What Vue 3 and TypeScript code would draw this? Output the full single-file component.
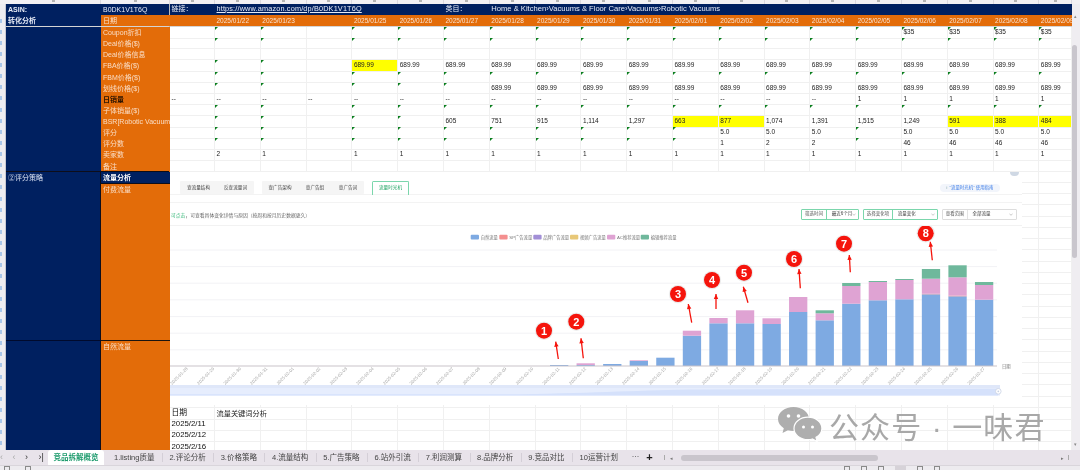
<script setup lang="ts">
interface Cell { text?: string; tri?: boolean; hi?: boolean }
const range = (a: number, b: number): number[] => Array.from({ length: b - a + 1 }, (_, i) => a + i)

const rowNums = range(1, 41)
const dates: Record<number, string> = {
  1: '2025/01/22', 2: '2025/01/23', 4: '2025/01/25', 5: '2025/01/26', 6: '2025/01/27', 7: '2025/01/28',
  8: '2025/01/29', 9: '2025/01/30', 10: '2025/01/31', 11: '2025/02/01', 12: '2025/02/02', 13: '2025/02/03',
  14: '2025/02/04', 15: '2025/02/05', 16: '2025/02/06', 17: '2025/02/07', 18: '2025/02/08', 19: '2025/02/09'
}
const columns = range(0, 19)
const labels = ['Coupon折扣', 'Deal价格($)', 'Deal价格信息', 'FBA价格($)', 'FBM价格($)', '划线价格($)', '日销量', '子体销量($)', 'BSR[Robotic Vacuum', '评分', '评分数', '卖家数', '备注']

const allTri = [1, 2, ...range(4, 19)]
function makeRow(tris: number[], vals: Record<number, string>, his: number[] = []): Cell[] {
  return columns.map((c) => ({ text: vals[c], tri: tris.includes(c), hi: his.includes(c) }))
}
function fill(from: number, to: number, v: string): Record<number, string> {
  const o: Record<number, string> = {}
  range(from, to).forEach((c) => { o[c] = v })
  return o
}
const rows: Cell[][] = [
  makeRow(allTri, fill(16, 19, '$35')),
  makeRow(allTri, {}),
  makeRow([], {}),
  makeRow([1, 2], fill(4, 19, '689.99'), [4]),
  makeRow(allTri, {}),
  makeRow([1, 2, 4, 5, 6], fill(7, 19, '689.99')),
  makeRow([], { ...fill(0, 14, '--'), ...fill(15, 19, '1') }),
  makeRow(allTri, {}),
  makeRow([1, 2, 4, 5], {
    6: '605', 7: '751', 8: '915', 9: '1,114', 10: '1,297', 11: '663', 12: '877', 13: '1,074', 14: '1,391',
    15: '1,515', 16: '1,249', 17: '591', 18: '388', 19: '484'
  }, [11, 12, 17, 18, 19]),
  makeRow([1, 2, 4, 5, 6, 7, 8, 9, 10, 11, 15], { 12: '5.0', 13: '5.0', 14: '5.0', ...fill(16, 19, '5.0') }),
  makeRow([1, 2, 4, 5, 6, 7, 8, 9, 10, 11, 15], { 12: '1', 13: '2', 14: '2', ...fill(16, 19, '46') }),
  makeRow([], { 1: '2', 2: '1', ...fill(4, 19, '1') }),
  makeRow([], {})
]
const blankRows = range(1, 21)
const sheetDates = ['2025/2/11', '2025/2/12', '2025/2/16']

const tabGroups = [
  [{ t: '查流量结构', w: 37 }, { t: '反查流量词', w: 37 }],
  [{ t: '查广告架构', w: 36 }, { t: '查广告组', w: 34 }, { t: '查广告词', w: 32 }]
]
const controls = [
  { k: '筛选时间', v: '最近6个月', kw: 24.5, w: 58, on: true },
  { k: '选择变化项', v: '流量变化', kw: 28.5, w: 74.7, on: true },
  { k: '查看范围', v: '全部流量', kw: 24.5, w: 74.7, on: false }
]

const palette = { blue: '#7eaae2', sp: '#f48f8f', brand: '#a28fd6', video: '#e8c878', pink: '#dfa3d3', green: '#6fb89c' }
const legend = [
  { x: 470.7, c: palette.blue, t: '自然流量' },
  { x: 499.3, c: palette.sp, t: 'SP广告流量' },
  { x: 533.3, c: palette.brand, t: '品牌广告流量' },
  { x: 570, c: palette.video, t: '视频广告流量' },
  { x: 607, c: palette.pink, t: 'AC推荐流量' },
  { x: 640.7, c: palette.green, t: '编辑推荐流量' }
]
const gridY = [250, 266.6, 283.2, 299.8, 316.6, 333.2, 349.8]
const axisY = 366
const barTops: number[][] = [
  [365], [365, 365, 363.3], [364], [361, 361, 360.3], [357.7],
  [335.7, 335.7, 330.7], [323.3, 323.3, 318], [323.3, 323.3, 310.3], [324, 324, 318.3],
  [312, 312, 297], [320.3, 320.3, 313.3, 310.3], [303.7, 303.7, 286, 283], [300.3, 300.3, 282, 281],
  [299.3, 299.3, 280, 279], [294.3, 293.8, 278.7, 269], [296.3, 295.6, 277.3, 265.3], [299.7, 299.7, 285, 282]
]
const layerColors = [palette.blue, palette.sp, palette.pink, palette.green]
const bars = barTops.flatMap((tops, i) =>
  tops.map((top, j) => ({
    key: `${i}-${j}`,
    x: 550 + i * 26.56,
    y: top,
    h: (j === 0 ? axisY : tops[j - 1]) - top,
    c: layerColors[j]
  })).filter((s) => s.h > 0)
)
const xLabels = [
  ...range(28, 31).map((d) => `2025-01-${d}`),
  ...range(1, 27).map((d) => `2025-02-${String(d).padStart(2, '0')}`)
].map((t, i) => ({ t, x: 179 + i * 26.57, y: 376 }))

const badges = [
  { n: 1, cx: 544, cy: 330.7, x1: 558.3, y1: 359, x2: 555.7, y2: 341.7 },
  { n: 2, cx: 576.3, cy: 321.7, x1: 583.3, y1: 358.3, x2: 581, y2: 338.3 },
  { n: 3, cx: 678, cy: 294, x1: 691.7, y1: 322.7, x2: 688.3, y2: 304 },
  { n: 4, cx: 712, cy: 280, x1: 716, y1: 309, x2: 716, y2: 294 },
  { n: 5, cx: 744, cy: 272.7, x1: 748, y1: 302.7, x2: 743.3, y2: 286.7 },
  { n: 6, cx: 794, cy: 259, x1: 800.3, y1: 288.3, x2: 799, y2: 269 },
  { n: 7, cx: 844, cy: 243.7, x1: 850.3, y1: 272.3, x2: 849.3, y2: 255 },
  { n: 8, cx: 925.7, cy: 233.3, x1: 932.3, y1: 260.3, x2: 930.3, y2: 241.7 }
].map((b) => ({
  ...b,
  angle: (Math.atan2(b.x1 - b.x2, b.y1 - b.y2) * -180) / Math.PI
}))
const sheetTabs = ['1.listing质量', '2.评论分析', '3.价格策略', '4.流量结构', '5.广告策略', '6.站外引流', '7.利润测算', '8.品牌分析', '9.竞品对比', '10运营计划']
</script>

<template>
  <div class="app">
    <div class="ruler">
      <div class="ruler-corner"></div>
      <div class="ruler-left"><span><i></i></span><span><i></i></span></div>
      <div class="gr ruler-cols"><span v-for="c in columns" :key="c"><i></i></span></div>
    </div>

    <div class="main">
      <div class="rowhead"><span v-for="n in rowNums" :key="n"><i></i></span></div>

      <div class="left">
        <div class="asin"><b class="c1">ASIN:</b><span class="c2">B0DK1V1T6Q</span></div>
        <div class="conv"><b class="c1">转化分析</b><span class="c2 date-label">日期</span></div>
        <div class="sec1">
          <div class="navy-col"></div>
          <div class="orange-col">
            <div v-for="(l, i) in labels" :key="l" class="lab" :class="{ dark: i === 6 }">{{ l }}</div>
          </div>
        </div>
        <div class="sec2">
          <div class="navy-col stack">
            <div class="strategy">②评分策略</div>
          </div>
          <div class="stack">
            <div class="flow-head">流量分析</div>
            <div class="orange-col paid"><div class="lab">付费流量</div></div>
            <div class="orange-col organic"><div class="lab">自然流量</div></div>
          </div>
        </div>
        <div class="navy-rule"></div>
      </div>

      <div class="cells">
        <div class="gr head-navy">
          <span class="hc" style="grid-column: 1">链接：</span>
          <a class="hc url" style="grid-column: 2 / span 5">https://www.amazon.com/dp/B0DK1V1T6Q</a>
          <span class="hc" style="grid-column: 7">类目：</span>
          <span class="hc cat" style="grid-column: 8 / span 13">Home &amp; Kitchen›Vacuums &amp; Floor Care›Vacuums›Robotic Vacuums</span>
        </div>
        <div class="gr head-orange">
          <span v-for="c in columns" :key="c" class="dc">{{ dates[c] }}</span>
        </div>
        <div v-for="(r, i) in rows" :key="i" class="gr row">
          <div v-for="(c, j) in r" :key="j" class="cell" :class="{ tri: c.tri, hi: c.hi }">{{ c.text }}</div>
        </div>
        <div v-for="b in blankRows" :key="'b' + b" class="gr row tall">
          <div v-for="c in columns" :key="c" class="cell"></div>
        </div>
        <div class="gr row tall">
          <div class="cell big">日期</div>
          <div class="cell kw">流量关键词分析</div>
          <div v-for="c in columns.slice(3)" :key="c" class="cell"></div>
        </div>
        <div v-for="d in sheetDates" :key="d" class="gr row tall">
          <div class="cell big">{{ d }}</div>
          <div v-for="c in columns.slice(1)" :key="c" class="cell"></div>
        </div>

        <div class="float">
          <div class="corner-mark"></div>
          <div class="f-tabs">
            <div v-for="(g, gi) in tabGroups" :key="gi" class="f-group">
              <span v-for="t in g" :key="t.t" class="f-tab" :style="{ width: t.w + 'px' }">{{ t.t }}</span>
            </div>
            <div class="f-active">流量时光机</div>
            <div class="help"><i>♀</i> "流量时光机" 使用指南</div>
          </div>
          <div class="f-gap"></div>
          <div class="f-tools">
            <div class="note"><em>可点击</em>，可查看具体变化详情与原因（按周和按月历史数据更久）</div>
            <div class="ctrls">
              <div v-for="c in controls" :key="c.k" class="ctrl" :class="{ on: c.on }" :style="{ width: c.w + 'px' }">
                <span class="ck" :style="{ width: c.kw + 'px' }">{{ c.k }}</span>
                <span class="cv">{{ c.v }}</span>
                <svg class="chev" width="4" height="3" viewBox="0 0 4 3"><path d="M.4.6 2 2.3 3.6.6" fill="none" stroke="#aaa" stroke-width=".6" /></svg>
              </div>
            </div>
          </div>
          <svg class="chart" width="852" height="179" viewBox="170 226 852 179">
            <g v-for="l in legend" :key="l.t">
              <rect :x="l.x" y="234.8" width="8.3" height="4.6" rx="1" :fill="l.c" />
              <text :x="l.x + 10" y="238.7" class="lg">{{ l.t }}</text>
            </g>
            <line v-for="y in gridY" :key="y" x1="170" x2="997" :y1="y" :y2="y" stroke="#f2f2f5" stroke-width="1" />
            <rect v-for="b in bars" :key="b.key" :x="b.x" :y="b.y" width="18.3" :height="b.h" :fill="b.c" />
            <line x1="170" x2="997" :y1="axisY" :y2="axisY" stroke="#c9c3c9" stroke-width="1" />
            <text x="1002" y="367.8" class="lg">日期</text>
            <text v-for="l in xLabels" :key="l.t" class="xl" :transform="`translate(${l.x} ${l.y}) rotate(-45)`" text-anchor="middle" y="1.5">{{ l.t }}</text>
            <rect x="170" y="385" width="830" height="10.6" fill="#e6edfd" />
            <rect x="170" y="385" width="830" height="3" fill="#dfe7f9" />
            <path d="M170 394.2 H520 C600 393 640 390 700 389.5 L998 388.8 V395.6 H170Z" fill="#d5e1fb" />
            <circle cx="998.3" cy="391.3" r="2.8" fill="#fff" stroke="#c9d2e3" stroke-width=".8" />
            <circle cx="998.3" cy="391.3" r=".9" fill="#c9d2e3" />
            <g v-for="a in badges" :key="a.n">
              <line :x1="a.x1" :y1="a.y1" :x2="a.x2" :y2="a.y2" stroke="#f5140c" stroke-width="1.3" />
              <path :d="`M0 0 l-2.200 5 h4.400 z`" :transform="`translate(${a.x2} ${a.y2}) rotate(${a.angle})`" fill="#f5140c" />
              <circle :cx="a.cx" :cy="a.cy" r="9.2" fill="#ececec" />
              <circle :cx="a.cx" :cy="a.cy" r="8" fill="#f5140c" />
              <text :x="a.cx" :y="a.cy + 3.8" text-anchor="middle" class="bn">{{ a.n }}</text>
            </g>
          </svg>
        </div>

        <div class="watermark">
          <svg width="44" height="36" viewBox="0 0 44 36">
            <path d="M15.500 0C7 0 0 5.300 0 12c0 3.800 2.300 7 5.800 9.200L4.500 26l5.400-2.700c1.800.5 3.700.8 5.600.8 8.500 0 15.500-5.400 15.500-12.100S24 0 15.500 0Z" fill="#aeaeae" />
            <circle cx="10.500" cy="9" r="1.800" fill="#fff" />
            <circle cx="20.500" cy="9" r="1.800" fill="#fff" />
            <path d="M30 10.200c-7.800 0-14 4.900-14 11.200s6.200 11.200 14 11.200c1.500 0 3-.2 4.400-.6l4.700 2.600-1.100-4.300c3.600-2 5.900-5.300 5.900-8.900 0-6.300-6.100-11.200-13.900-11.200Z" fill="#aeaeae" stroke="#fff" stroke-width="1.200" />
            <circle cx="25.500" cy="20" r="1.500" fill="#fff" />
            <circle cx="34.500" cy="20" r="1.500" fill="#fff" />
          </svg>
          <span>公众号 · 一味君</span>
        </div>
      </div>

      <div class="vscroll">
        <span class="up">▴</span>
        <div class="vthumb"></div>
        <span class="down">▾</span>
      </div>
    </div>

    <div class="tabs">
      <div class="tnav"><span>‹</span><span>‹</span><b>›</b><b>›|</b></div>
      <div class="tab-active">竞品拆解概览</div>
      <div class="tlist"><span v-for="t in sheetTabs" :key="t" class="tab">{{ t }}</span></div>
      <span class="more">···</span>
      <span class="plus">+</span>
      <div class="hbar">
        <i class="tick"></i><i class="arr">◂</i>
        <div class="hthumb"></div>
        <i class="arr">▸</i><i class="tick"></i>
      </div>
    </div>

    <div class="status">
      <div class="st-left"><i></i><i></i></div>
      <div class="st-right"><i></i><i></i><i></i><b></b><i></i><i></i></div>
    </div>
  </div>
</template>

<style>
html, body { margin: 0; background: #fff; }
</style>

<style scoped>
.app {
  width: 1080px;
  height: 470px;
  overflow: hidden;
  display: flex;
  flex-direction: column;
  font-family: "Liberation Sans", "Noto Sans CJK SC", sans-serif;
  filter: blur(0.35px);
  background: #fff;
}
.gr {
  display: grid;
  grid-template-columns: 45px repeat(18, 45.8px) 32.6px;
}
.ruler { height: 4px; display: flex; background: #f3f1f4; overflow: hidden; flex: none; }
.ruler-corner { width: 6px; }
.ruler-left { width: 164px; display: grid; grid-template-columns: 95px 69px; }
.ruler-left span, .ruler-cols span { display: flex; justify-content: center; border-right: 1px solid #dcd9df; }
.ruler-left i, .ruler-cols i { display: block; width: 3px; height: 2px; background: #b5b5b5; }
.main { display: flex; height: 446px; flex: none; overflow: hidden; }
.rowhead { width: 6px; background: #eeedf1; display: flex; flex-direction: column; overflow: hidden; flex: none; border-right: 1px solid #c9c9d2; box-sizing: border-box; padding-top: 11px; }
.rowhead span { height: 11.13px; flex: none; display: flex; align-items: center; }
.rowhead i { display: block; width: 2px; height: 4px; background: #a9c7ea; }

.left { width: 164px; flex: none; display: flex; flex-direction: column; position: relative; border-right: 1px solid #b9b9b9; box-sizing: border-box; }
.asin, .conv { display: grid; grid-template-columns: 95px 69px; color: #e6ebf6; font-size: 7px; background: #002060; }
.asin { height: 10.5px; line-height: 11.5px; }
.conv { height: 11.5px; line-height: 11.5px; border-bottom: 1px solid #d4d4d4; box-sizing: content-box; }
.c1 { padding-left: 2px; font-weight: 700; }
.c2 { padding-left: 2px; }
.date-label { background: #e36c09; color: #f9dfc8; }
.sec1 { display: grid; grid-template-columns: 95px 69px; height: 144px; }
.navy-col { background: #002060; }
.orange-col { background: #e36c09; }
.lab { height: 11.13px; line-height: 11.13px; padding-left: 2px; font-size: 7px; color: #f9dcc4; white-space: nowrap; }
.lab.dark { color: #2b1400; font-weight: 700; }
.sec2 { display: grid; grid-template-columns: 95px 69px; flex: 1; border-top: 1px solid #0d0d1a; min-height: 0; }
.stack { display: flex; flex-direction: column; }
.navy-col.stack { border-right: 1px solid #0d0d1a; position: relative; }
.strategy { height: 11px; line-height: 11px; font-size: 7px; color: #dfe6f5; padding-left: 2px; }
.flow-head { height: 11px; line-height: 11.5px; padding-left: 2px; background: #002060; color: #fff; font-size: 7px; font-weight: 700; border-bottom: 1px solid #0d0d1a; }
.paid { height: 156px; border-bottom: 1px solid #1a1410; }
.organic { flex: 1; }
.navy-rule { position: absolute; left: 0; width: 95px; top: 336px; height: 1px; background: #000a2c; }

.cells { width: 902px; flex: none; position: relative; overflow: hidden; }
.head-navy { height: 10.5px; line-height: 10.5px; background: #002060; color: #e6ebf6; font-size: 7px; white-space: nowrap; }
.hc { padding-left: 1.500px; grid-row: 1; }
.cat { font-size: 7.600px; }
.url { text-decoration: underline; font-size: 7.3px; letter-spacing: .16px; }
.head-orange { height: 11.5px; line-height: 11.5px; background: #e36c09; color: #f8e2d0; font-size: 6.500px; border-bottom: 1px solid #d4d4d4; }
.dc { padding-left: 1.500px; white-space: nowrap; overflow: hidden; }
.row { height: 11.13px; }
.row.tall { height: 11.25px; }
.cell {
  position: relative;
  box-sizing: border-box;
  border-right: 1px solid #f0f0f0;
  border-bottom: 1px solid #f0f0f0;
  padding-left: 1.500px;
  font-size: 6.500px;
  line-height: 10.5px;
  color: #222;
  white-space: nowrap;
}
.cell.hi { background: #ffff00; }
.cell.tri::before {
  content: "";
  position: absolute;
  left: 0;
  top: 0;
  border-top: 3px solid #0a7f1e;
  border-right: 3px solid transparent;
}
.cell.big { font-size: 7.800px; line-height: 10.5px; color: #111; }
.cell.kw { grid-column: span 2; font-size: 7.200px; line-height: 11px; color: #222; }

.float { position: absolute; left: 0; top: 168px; width: 852px; height: 233px; background: #fff; color: #555; }
.corner-mark { position: absolute; right: 3px; top: 0; width: 9px; height: 4px; border-radius: 0 0 6px 6px; background: #cfd8e4; }
.f-tabs { height: 23px; box-sizing: border-box; padding: 9px 22px 0 10px; display: flex; gap: 8px; border-bottom: 1px solid #f3f3f3; }
.f-group { display: flex; background: #f5f5f5; height: 13px; border-radius: 1px; }
.f-tab, .f-active { font-size: 4.600px; line-height: 13px; text-align: center; color: #444; white-space: nowrap; }
.f-active { width: 37px; height: 14px; box-sizing: border-box; line-height: 12px; color: #1fa463; border: 1px solid #7bd6ac; border-bottom: 0; border-radius: 1.500px 1.500px 0 0; }
.help { margin: 3px 0 0 auto; height: 8px; width: 60px; border-radius: 4px; background: #f2f5fb; color: #3a7ce8; font-size: 4.400px; line-height: 8px; padding-left: 5px; box-sizing: border-box; white-space: nowrap; }
.help i { font-style: normal; color: #8aa; }
.f-gap { height: 8px; border-bottom: 1px solid #f3f3f3; box-sizing: border-box; }
.f-tools { height: 23px; box-sizing: border-box; display: flex; align-items: center; justify-content: space-between; padding: 1px 5.300px 0 1px; border-bottom: 1px solid #f2f2f2; }
.note { font-size: 4.800px; color: #666; white-space: nowrap; }
.note em { font-style: normal; color: #2fb573; }
.ctrls { display: flex; gap: 4px; }
.ctrl { height: 10.300px; box-sizing: border-box; display: flex; align-items: center; border: 1px solid #ddd; border-radius: 1px; font-size: 4.500px; line-height: 8.300px; color: #555; position: relative; white-space: nowrap; }
.ctrl.on { border-color: #7bd6ac; }
.ck { box-sizing: border-box; text-align: center; border-right: 1px solid #e4e4e4; height: 100%; flex: none; }
.ctrl.on .ck { border-right-color: #7bd6ac; }
.cv { padding-left: 5px; color: #444; }
.chev { position: absolute; right: 2.500px; top: 3px; }
.chart { display: block; }
.chart .lg { font-size: 4.300px; fill: #777; }
.chart .xl { font-size: 4.400px; fill: #a5a5a5; }
.chart .bn { font-size: 11px; font-weight: 700; fill: #fff; }

.watermark { position: absolute; left: 608px; top: 403px; height: 36px; display: flex; align-items: center; gap: 7px; color: #a8a8a8; font-size: 30px; letter-spacing: 1.100px; line-height: 36px; white-space: nowrap; pointer-events: none; }
.watermark svg { flex: none; }
.watermark span { padding-top: 5px; }

.vscroll { width: 8px; flex: none; background: #efedf1; position: relative; font-size: 5px; color: #888; }
.up { position: absolute; left: 1.500px; top: 9px; }
.down { position: absolute; left: 1.500px; top: 437px; }
.vthumb { position: absolute; left: 0; top: 41px; width: 5.300px; height: 213px; background: #c9c6cd; border-radius: 3px; }

.tabs { height: 15px; flex: none; display: flex; align-items: stretch; background: #e8e3ea; font-size: 7.500px; color: #444; white-space: nowrap; }
.tnav { width: 48px; flex: none; box-sizing: border-box; display: flex; gap: 6.500px; padding-left: 0; line-height: 14px; font-size: 9px; color: #aaa; }
.tnav span { width: 6px; }
.tnav b { color: #333; width: 7px; font-weight: 400; }
.tab-active { width: 56px; flex: none; background: #fff; color: #1f9c6e; font-weight: 700; text-align: center; line-height: 15px; border-radius: 3px 3px 0 0; }
.tlist { display: flex; padding-left: 2.500px; flex: none; line-height: 15px; }
.tab { padding: 0 7.500px; position: relative; }
.tab + .tab::before { content: ""; position: absolute; left: 0; top: 3px; bottom: 3px; width: 1px; background: #d4cfd7; }
.more { width: 20px; flex: none; text-align: center; line-height: 14px; color: #555; }
.plus { width: 8px; flex: none; text-align: center; line-height: 14px; font-size: 11px; color: #222; font-weight: 700; }
.hbar { flex: 1; display: flex; align-items: center; padding-left: 11px; padding-right: 11px; }
.tick { width: 1px; height: 5px; background: #aaa; flex: none; }
.arr { font-style: normal; font-size: 5px; color: #777; width: 12px; text-align: center; flex: none; }
.hthumb { width: 197px; height: 6px; border-radius: 3px; background: #c9c5cc; margin-left: 4px; margin-right: auto; }

.status { height: 5px; flex: none; background: #edebef; border-top: 1px solid #d9d5db; box-sizing: border-box; display: flex; justify-content: space-between; overflow: hidden; }
.status i { display: block; width: 6px; height: 6px; border: 1px solid #8a8a8a; box-sizing: border-box; }
.status b { display: block; width: 11px; height: 6px; background: #d6d2d8; }
.st-left { display: flex; gap: 15px; padding-left: 4px; }
.st-right { display: flex; gap: 11px; padding-right: 140px; }
</style>
